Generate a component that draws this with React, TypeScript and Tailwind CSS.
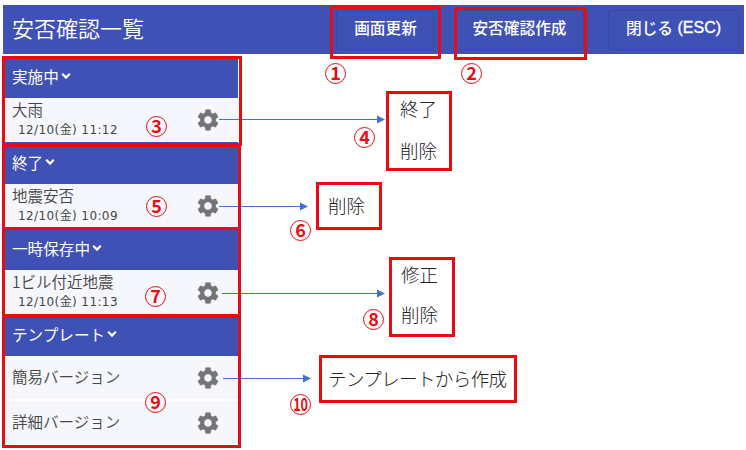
import React from 'react';

const JP = "font-['Noto_Sans_CJK_JP',sans-serif]";

function Gear() {
  return (
    <svg viewBox="0 0 24 24" className="-mr-[0.5px] h-[26px] w-[26px] shrink-0 fill-[#747577] stroke-[#747577] stroke-[0.2]" aria-hidden="true">
      <path d="M19.14 12.94c.04-.3.06-.61.06-.94 0-.32-.02-.64-.07-.94l2.03-1.58c.18-.14.23-.41.12-.61l-1.92-3.32c-.12-.22-.37-.29-.59-.22l-2.39.96c-.5-.38-1.03-.7-1.62-.94l-.36-2.54c-.04-.24-.24-.41-.48-.41h-3.84c-.24 0-.43.17-.47.41l-.36 2.54c-.59.24-1.13.57-1.62.94l-2.39-.96c-.22-.08-.47 0-.59.22L2.74 8.87c-.12.21-.08.47.12.61l2.03 1.58c-.05.3-.09.63-.09.94s.02.64.07.94l-2.03 1.58c-.18.14-.23.41-.12.61l1.92 3.32c.12.22.37.29.59.22l2.39-.96c.5.38 1.03.7 1.62.94l.36 2.54c.05.24.24.41.48.41h3.84c.24 0 .44-.17.47-.41l.36-2.54c.59-.24 1.13-.56 1.62-.94l2.39.96c.22.08.47 0 .59-.22l1.92-3.32c.12-.22.07-.47-.12-.61l-2.01-1.58zM12 15.6c-1.98 0-3.6-1.62-3.6-3.6s1.62-3.6 3.6-3.6 3.6 1.62 3.6 3.6-1.62 3.6-3.6 3.6z" />
    </svg>
  );
}

function SectionHead({ label, className }: { label: string; className: string }) {
  return (
    <div className={`flex items-center bg-[#3f51b5] pb-[3px] pl-[9px] text-[15.6px] leading-5 text-white ${className}`}>
      <span>{label}</span>
      <svg viewBox="0 0 10 8" className="ml-[2px] h-2 w-[10px] fill-none stroke-white stroke-[2.2]" aria-hidden="true">
        <path d="M1.2 1.8 5 5.6 8.8 1.8" />
      </svg>
    </div>
  );
}

function Row({ title, time, className }: { title: string; time?: string; className: string }) {
  return (
    <div className={`flex justify-between bg-[#f6f7fc] pl-[9px] pr-[18px] text-[#454545] ${className}`}>
      <div className={time ? '' : 'self-center pb-[3px]'}>
        <div className="text-[15.5px] font-[350] leading-[22px]">{title}</div>
        {time && (
          <div className="whitespace-nowrap pl-[6px] font-['DejaVu_Sans','Noto_Sans_CJK_JP',sans-serif] text-[12px] leading-[21px] tracking-[0.4px]">
            {time}
          </div>
        )}
      </div>
      <div className="self-center">
        <Gear />
      </div>
    </div>
  );
}

const buttonClass =
  'flex h-10 items-center justify-center rounded-[3px] border border-[#3748a3] pb-[3px] text-[15.7px] font-medium text-white';

function Frame({ className, children }: { className: string; children?: React.ReactNode }) {
  return (
    <div className={`absolute border-3 border-[#e60c10] text-[18.5px] font-light text-[#222] ${className}`}>
      {children}
    </div>
  );
}

function Mark({ n, className }: { n: number; className: string }) {
  return (
    <span
      className={`absolute flex h-[21px] w-[21px] items-center justify-center rounded-full border border-[#e60c10] pb-[2px] text-[18px] font-bold leading-[19px] text-[#e60c10] ${className}`}
    >
      <span className={n > 9 ? 'scale-x-[0.7]' : ''}>{n}</span>
    </span>
  );
}

const arrows = [
  { y: 119.5, from: 219, to: 385 },
  { y: 206.5, from: 219, to: 308 },
  { y: 293.5, from: 222, to: 385 },
  { y: 378.5, from: 223, to: 311 },
];

export default function App() {
  return (
    <div className={`relative h-[450px] w-[746px] overflow-hidden bg-white pl-[3px] pt-[5px] ${JP}`}>
      <header className="flex h-[49px] w-[741px] items-center bg-[#3f51b5] pl-[9px] pr-[5px] text-white">
        <h1 className="mr-auto pb-[5px] text-[22px] font-[350] leading-8">安否確認一覧</h1>
        <button className={`${buttonClass} mr-[21px] w-[98px] pl-px`}>画面更新</button>
        <button className={`${buttonClass} mr-[24px] w-[129px]`}>安否確認作成</button>
        <button className={`${buttonClass} w-[131px] whitespace-pre`}>
          閉じる
          <span className="font-['Liberation_Sans',sans-serif] text-[16px] [-webkit-text-stroke:0.35px_white]"> (ESC)</span>
        </button>
      </header>

      <aside className="flex w-[235px] flex-col pt-[2px]">
        <SectionHead label="実施中" className="h-[42px]" />
        <Row title="大雨" time="12/10(金) 11:12" className="h-[44px]" />
        <SectionHead label="終了" className="h-[42px]" />
        <Row title="地震安否" time="12/10(金) 10:09" className="h-[44px]" />
        <SectionHead label="一時保存中" className="h-[42px]" />
        <Row title="1ビル付近地震" time="12/10(金) 11:13" className="h-[45px]" />
        <SectionHead label="テンプレート" className="h-[41px]" />
        <Row title="簡易バージョン" className="h-[43px]" />
        <Row title="詳細バージョン" className="mt-[2px] h-[43px]" />
      </aside>

      <svg className="absolute left-0 top-0 h-[450px] w-[746px]" viewBox="0 0 746 450" aria-hidden="true">
        {arrows.map((a) => (
          <g key={a.y}>
            <path d={`M${a.from} ${a.y}H${a.to - 6}`} stroke="#4472c4" />
            <path d={`M${a.to} ${a.y}l-8 -4v8z`} fill="#4472c4" />
          </g>
        ))}
      </svg>

      <Frame className="left-[330px] top-[6px] h-[53px] w-[111px]" />
      <Frame className="left-[454px] top-[7px] h-[53px] w-[133px]" />
      <Frame className="left-[2px] top-[56px] h-[90px] w-[240px]" />
      <Frame className="left-[2px] top-[144px] h-[86px] w-[239px]" />
      <Frame className="left-[2px] top-[227px] h-[90px] w-[239px]" />
      <Frame className="left-[2px] top-[315px] h-[133px] w-[239px]" />

      <Frame className="left-[386px] top-[91px] flex h-[80px] w-[66px] flex-col gap-[14px] pl-[11px] leading-[28px]">
        <span>終了</span>
        <span>削除</span>
      </Frame>
      <Frame className="left-[316px] top-[182px] flex h-[48px] w-[66px] items-center pl-[9px]">
        <span>削除</span>
      </Frame>
      <Frame className="left-[389px] top-[257px] flex h-[80px] w-[66px] flex-col gap-[12px] pl-[9px] leading-[28px]">
        <span>修正</span>
        <span>削除</span>
      </Frame>
      <Frame className="left-[319px] top-[355px] flex h-[48px] w-[198px] items-center whitespace-nowrap pl-[6px]">
        <span className="tracking-[-0.6px]">テンプレートから作成</span>
      </Frame>

      <Mark n={1} className="left-[325px] top-[63px]" />
      <Mark n={2} className="left-[461px] top-[63px]" />
      <Mark n={3} className="left-[146px] top-[116px]" />
      <Mark n={4} className="left-[354px] top-[127px]" />
      <Mark n={5} className="left-[146px] top-[196px]" />
      <Mark n={6} className="left-[290px] top-[220px]" />
      <Mark n={7} className="left-[145px] top-[286px]" />
      <Mark n={8} className="left-[363px] top-[309px]" />
      <Mark n={9} className="left-[145px] top-[392px]" />
      <Mark n={10} className="left-[290px] top-[394px]" />
    </div>
  );
}
